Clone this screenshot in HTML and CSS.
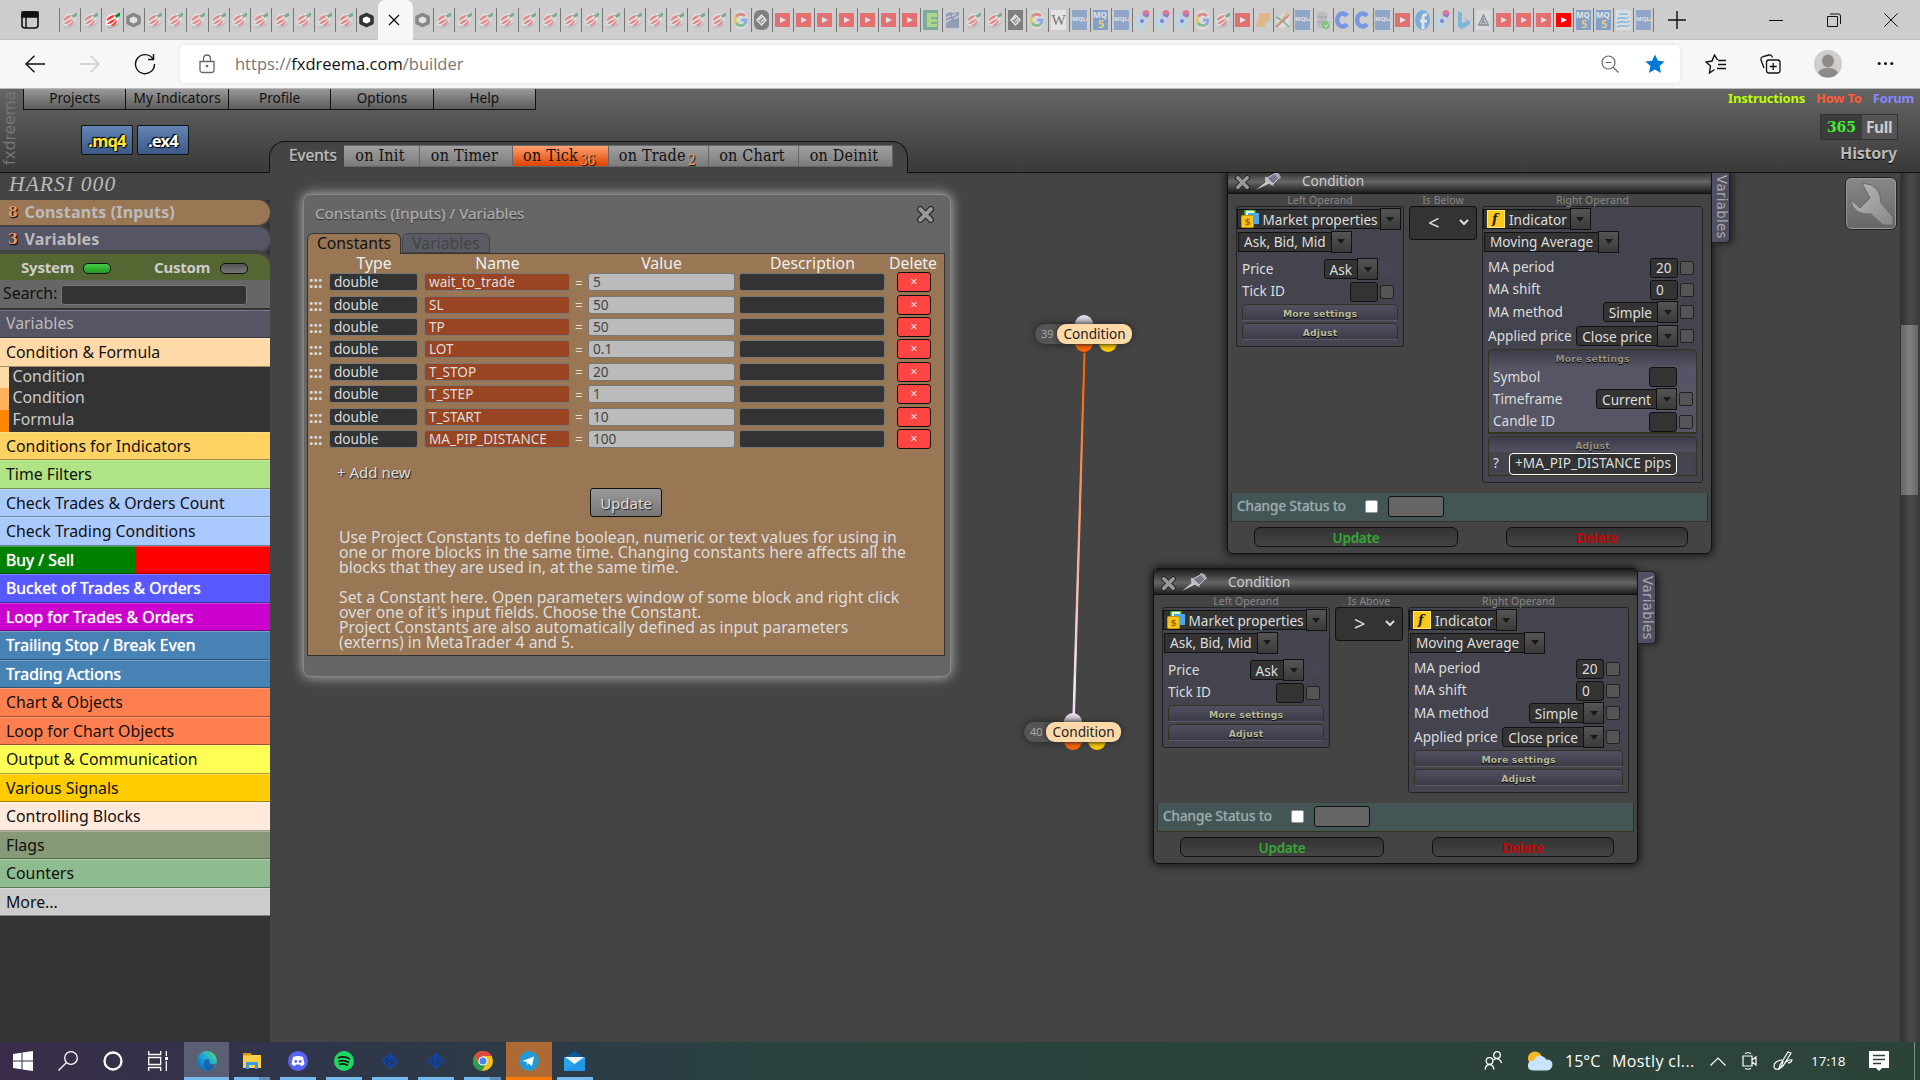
FILE: index.html
```html
<!DOCTYPE html>
<html lang="en">

<head>
    <meta charset="UTF-8">
    <title>fxDreema builder</title>
    <link rel="stylesheet" href="styles.css">
</head>

<body>
    <svg class="defs" width="0" height="0">
        <linearGradient id="wire" x1="0" y1="0" x2="0" y2="1">
            <stop offset="0.05" stop-color="#f60" />
            <stop offset="0.9" stop-color="#f6e6fa" />
        </linearGradient>
        <linearGradient id="edgeg" x1="0" y1="1" x2="1" y2="0">
            <stop offset="0" stop-color="#0c59a4" />
            <stop offset="0.5" stop-color="#1ba5dd" />
            <stop offset="1" stop-color="#5be06a" />
        </linearGradient>
        <linearGradient id="metal" x1="0" y1="0" x2="1" y2="1">
            <stop offset="0" stop-color="#bbb" />
            <stop offset="1" stop-color="#888" />
        </linearGradient>
    </svg>
    <svg class="symbols">
        <symbol id="fx" viewBox="0 0 15 20">
            <path d="M2 16Q7 19 13 13l1 1Q9 19 3 18z" fill="#aaa" />
            <path d="M1 15Q0 8 4 5 8 2 13 4 15 9 12 13 8 17 1 15z" fill="#f2f2f2" />
            <path d="M2 9Q5 5 10 5L8 7.500 2 11zM5 16Q8 14 12 10 12 14 8 16z" fill="#f33" />
            <path d="M2 14Q6 10 11 8.500 9 12 4 14z" fill="#f22" />
            <path d="M10 5L15 2.500V6L11 8z" fill="#178a3c" />
        </symbol>
        <symbol id="hex" viewBox="0 0 15 20">
            <path d="M7.500 4.500L13 7.200V12.800L7.500 15.500 2 12.800V7.200z" fill="#fff" stroke="#333" stroke-width="3.600" stroke-linejoin="round" />
        </symbol>
        <symbol id="g" viewBox="0 0 15 20">
            <ellipse cx="7.500" cy="10" rx="7.500" ry="10" fill="#fff" opacity=".7" />
            <g fill="none" stroke-width="3">
                <path d="M12 6A6 6 0 0 0 3 6.500" stroke="#ea4335" />
                <path d="M3 6.500A6 6 0 0 0 3 13" stroke="#fbbc05" />
                <path d="M3 13A6 6 0 0 0 11 14.500" stroke="#34a853" />
                <path d="M11 14.500Q13 13 13 10H8" stroke="#4285f4" />
            </g>
        </symbol>
        <symbol id="pill" viewBox="0 0 15 20">
            <rect width="15" height="20" rx="6" fill="#222" />
            <path d="M7.500 5L12 10 7.500 15 3 10zM5 10l3-3M7 12l3-3" fill="none" stroke="#fff" stroke-width="1.500" />
        </symbol>
        <symbol id="dark" viewBox="0 0 15 20">
            <rect width="15" height="20" fill="#222" />
            <path d="M7.500 5L12 10 7.500 15 3 10zM5 10l3-3M7 12l3-3" fill="none" stroke="#fff" stroke-width="1.500" />
        </symbol>
        <symbol id="yt" viewBox="0 0 15 20">
            <rect y="3" width="15" height="14" fill="#f00" />
            <path d="M5 7L11 10 5 13z" fill="#fff" />
        </symbol>
        <symbol id="e" viewBox="0 0 15 20">
            <rect width="15" height="20" fill="#1e8a5c" />
            <path d="M4 3H14V7H8V9H14V12H8V14H14V17H4z" fill="#8be03c" />
        </symbol>
        <symbol id="blue" viewBox="0 0 15 20">
            <path d="M1 4l4-2 3 1 6-1V18H1z" fill="#4a6199" />
            <path d="M1 8l4-2M1 12l5-3M7 6l4-2M9 9l5-3" stroke="#ccc" stroke-width="1.500" />
        </symbol>
        <symbol id="w" viewBox="0 0 15 20">
            <rect width="15" height="20" fill="#fff" />
            <text x="7.500" y="15" font-family="Liberation Serif" font-size="15" text-anchor="middle">W</text>
        </symbol>
        <symbol id="mql4" viewBox="0 0 15 20">
            <rect width="15" height="20" fill="#4a76c4" />
            <text x="0" y="11" font-family="Open Sans" font-weight="bold" font-size="6" fill="#fff">MQL</text>
            <path d="M13 11l2-4v4z" fill="#fc3" />
        </symbol>
        <symbol id="mql5" viewBox="0 0 15 20">
            <rect width="15" height="20" fill="#2b6cc4" />
            <text x="0" y="8" font-family="Open Sans" font-weight="bold" font-size="8" fill="#fff">MQ</text>
            <text x="5" y="18" font-family="Open Sans" font-weight="bold" font-size="11" fill="#fc2">5</text>
        </symbol>
        <symbol id="dots" viewBox="0 0 15 20">
            <path d="M1 6L10 1 13 12 7 20 0 16z" fill="#a9def5" />
            <circle cx="11" cy="3.500" r="3.500" fill="#f0134d" />
            <path d="M8 4l6 1-2 3z" fill="#22e" />
            <circle cx="7" cy="11" r="2" fill="#22e" />
        </symbol>
        <symbol id="org" viewBox="0 0 15 20">
            <path d="M4 3H15V11L12 11 9 17H1L3 12H1L4 8z" fill="#f7a035" />
        </symbol>
        <symbol id="chart" viewBox="0 0 15 20">
            <path d="M1 12L9 2 15 5 14 16 4 18z" fill="#f4f4e8" />
            <path d="M1 17L14 5" stroke="#c33" stroke-width="2" />
            <path d="M1 7L8 11 14 17" fill="none" stroke="#284" stroke-width="1.500" />
            <path d="M3 14L12 3" stroke="#c93" stroke-width="1.500" />
        </symbol>
        <symbol id="db" viewBox="0 0 15 20">
            <path d="M2 3Q7 0 12 3V17Q7 20 2 17z" fill="#a9a9b9" />
            <path d="M2 7H12M2 12H12" stroke="#667" />
            <circle cx="11" cy="15" r="4" fill="#2b2" />
            <path d="M9 15l2 2 3-4" fill="none" stroke="#fff" />
        </symbol>
        <symbol id="c" viewBox="0 0 15 20">
            <path d="M12 6A5.500 6.500 0 1 0 12 14" fill="none" stroke="#15f" stroke-width="4.500" />
        </symbol>
        <symbol id="fb" viewBox="0 0 15 20">
            <ellipse cx="7.500" cy="10" rx="7.500" ry="10" fill="#1487f0" />
            <path d="M12 5Q8 4 8 8V19M5 11H12" fill="none" stroke="#fff" stroke-width="3" />
        </symbol>
        <symbol id="bing" viewBox="0 0 15 20">
            <path d="M2 1L6 3V13L11 11 7 8 14 11V14L6 19 2 17z" fill="#1f9bea" />
        </symbol>
        <symbol id="tri" viewBox="0 0 15 20">
            <rect width="15" height="20" fill="#f4f4fa" opacity=".7" />
            <path d="M7.500 5L12.500 15H2.500zM7.500 8v5M5 15l2-5 3 5" fill="none" stroke="#345" stroke-width="1.300" />
        </symbol>
        <symbol id="lines" viewBox="0 0 15 20">
            <rect width="15" height="20" fill="#e4f2fb" />
            <path d="M3 4h9M1 9q3-2 6-1t6-1M1 13q4-2 7-1t6-1M1 17q4-2 7-1t6-1" fill="none" stroke="#39e" stroke-width="1.500" />
        </symbol>
        <symbol id="x" viewBox="0 0 16 16">
            <path d="M3 3L13 13M13 3L3 13" stroke="#2a2a2a" stroke-width="6" stroke-linecap="round" />
            <path d="M3 3L13 13M13 3L3 13" stroke="#999" stroke-width="3.800" stroke-linecap="round" />
        </symbol>
        <symbol id="pin" viewBox="0 0 26 20">
            <path d="M0 19L11 10l3 2z" fill="#ccc" />
            <path d="M9 6q6 0 9 9l-3-1-6-4z" fill="#bbc" />
            <path d="M11 7L20 2 23 7 17 13z" fill="#778" stroke="#ccd" />
            <path d="M18 1q5-1 7 6l-2 1q-3-2-5-7z" fill="#aab" />
        </symbol>
        <symbol id="market" viewBox="0 0 18 18">
            <path d="M4 0H14V10H4z" fill="#dfd" stroke="#3b2" stroke-width="1.500" />
            <rect x="7" y="3" width="11" height="11" fill="#4aa8ee" />
            <rect x="0.500" y="5.500" width="12" height="12" rx="1" fill="#f9c41b" stroke="#c8920a" />
            <text x="3.500" y="15" font-family="DejaVu Sans" font-weight="bold" font-size="9" fill="#a60">$</text>
        </symbol>
        <symbol id="func" viewBox="0 0 18 18">
            <rect x="0.500" y="0.500" width="17" height="17" fill="#fbc81c" stroke="#ffe680" />
            <text x="5" y="13" font-family="DejaVu Serif" font-style="italic" font-weight="bold" font-size="13" fill="#222">f</text>
        </symbol>
        <symbol id="term" viewBox="0 0 20 20">
            <path d="M10 1L19 10 10 19 1 10zM6 10l6-6M8 14l6-6" fill="#0f3f94" stroke="#1d4fa8" />
            <path d="M7 6v9M10 9l4 2-4 2" stroke="#24364a" stroke-width="1.500" fill="none" />
        </symbol>
    </svg>

    <div class="tabstrip">
        <svg class="tabmenu" width="18" height="18" viewBox="0 0 18 18"><rect x="1" y="1" width="16" height="16" rx="3" fill="none" stroke="#111" stroke-width="1.600" /><path d="M1 1H17V6H1zM5 5V17" fill="#111" stroke="#111" stroke-width="1.400" /></svg>
        <div class="favs left" id="favsA"></div>
        <div class="tab-active"><svg width="12" height="12" viewBox="0 0 12 12"><path d="M1 1L11 11M11 1L1 11" stroke="#111" stroke-width="1.300" /></svg></div>
        <div class="favs mid" id="favsB"></div>
        <div class="favs right" id="favsC"></div>
        <svg class="newtab" width="18" height="18" viewBox="0 0 18 18"><path d="M9 0V18M0 9H18" stroke="#111" stroke-width="1.400" /></svg>
        <div class="wincontrols">
            <svg width="14" height="14" viewBox="0 0 14 14"><path d="M0 7.500H14" stroke="#111" /></svg>
            <svg width="14" height="14" viewBox="0 0 14 14"><path d="M.5 3.500h10v10H.5zM3 1h8.500q2 0 2 2v8" fill="none" stroke="#111" /></svg>
            <svg width="14" height="14" viewBox="0 0 14 14"><path d="M.5.5l13 13M13.500.5l-13 13" stroke="#111" /></svg>
        </div>
    </div>

    <div class="toolbar">
        <svg class="back" width="20" height="18" viewBox="0 0 20 18"><path d="M20 9H1M9.500.700L1 9l8.500 8.300" fill="none" stroke="#111" stroke-width="1.400" /></svg>
        <svg class="fwd" width="20" height="18" viewBox="0 0 20 18"><path d="M0 9H19M10.500.700L19 9l-8.500 8.300" fill="none" stroke="#ccc" stroke-width="1.400" /></svg>
        <svg class="reload" width="22" height="22" viewBox="0 0 22 22"><path d="M19 6A9.500 9.500 0 1 0 20.500 11M19.500 1V6.500H14" fill="none" stroke="#111" stroke-width="1.400" /></svg>
        <div class="address">
            <svg class="lock" width="16" height="20" viewBox="0 0 16 20"><path d="M1 7.500H15V16q0 2.500-2.500 2.500h-9Q1 18.500 1 16zM4.500 7.500V5q0-4 3.500-4t3.500 4v2.500" fill="none" stroke="#666" stroke-width="1.300" /><circle cx="8" cy="12" r="1.300" fill="#666" /></svg>
            <span class="url">https://<b>fxdreema.com</b>/builder</span>
            <svg class="zoomout" width="18" height="18" viewBox="0 0 18 18"><circle cx="7.500" cy="7.500" r="6.500" fill="none" stroke="#666" stroke-width="1.200" /><path d="M4.500 7.500h6M12 12l5.500 5.500" stroke="#666" stroke-width="1.200" /></svg>
            <svg width="20" height="20" viewBox="0 0 20 20"><path d="M10 .5l2.900 6.200 6.700.800-5 4.600 1.400 6.900-6-3.400-6 3.400 1.400-6.900-5-4.600 6.700-.800z" fill="#0078d7" /></svg>
        </div>
        <svg class="fav" width="21" height="20" viewBox="0 0 21 20"><path d="M12.500 6L9.500 1 7 7 1 8l4.500 4L4.500 19 9.500 15.500M13 6.500h8M13 10.500h8M12 14.500h9" fill="none" stroke="#111" stroke-width="1.400" /></svg>
        <svg class="coll" width="21" height="20" viewBox="0 0 21 20"><rect x="6.500" y="6" width="13.500" height="13" rx="2.500" fill="#f7f7f7" stroke="#111" stroke-width="1.300" /><path d="M4 14L1 6Q.5 3.500 3 2.500L9 1q2.500-.5 3.500 2.500M13.200 9v7M9.700 12.500h7" fill="none" stroke="#111" stroke-width="1.300" /></svg>
        <svg class="avatar" width="28" height="28" viewBox="0 0 28 28"><circle cx="14" cy="14" r="14" fill="#d0cdca" /><ellipse cx="14" cy="11" rx="6" ry="6.500" fill="#8e8a87" /><path d="M4 23q2-5 10-5t10 5q-4 4.500-10 4.500T4 23z" fill="#8e8a87" /></svg>
        <svg class="dots3" width="17" height="5" viewBox="0 0 17 5"><g fill="#111"><circle cx="2.200" cy="2.500" r="1.500" /><circle cx="8.500" cy="2.500" r="1.500" /><circle cx="14.800" cy="2.500" r="1.500" /></g></svg>
    </div>

    <header>
        <div class="brand">fxdreema</div>
        <nav class="menu"><a>Projects</a><a>My Indicators</a><a>Profile</a><a>Options</a><a>Help</a></nav>
        <div class="exports"><button class="mq4">.mq4</button><button>.ex4</button></div>
        <div class="events">
            <span class="caption">Events</span>
            <a class="ev w1">on Init</a><a class="ev w2">on Timer</a><a class="ev w3 valgt">on Tick<sub>36</sub></a><a class="ev w4">on Trade<sub>2</sub></a><a class="ev w5">on Chart</a><a class="ev w6">on Deinit</a>
        </div>
        <div class="account">
            <div class="links"><a class="ins">Instructions</a><a class="how">How To</a><a class="forum">Forum</a></div>
            <div class="plan"><b>365</b><span>Full</span></div>
            <div class="history">History</div>
        </div>
    </header>

    <div class="work">
        <aside>
            <div class="project">HARSI 000</div>
            <div class="pill const"><i>8</i>Constants (Inputs)</div>
            <div class="pill vars"><i>3</i>Variables</div>
            <div class="switches"><span>System</span><em class="on"></em><span class="cust">Custom</span><em></em></div>
            <div class="search">Search:<div class="searchbox"></div></div>
            <div class="cat first" style="background-color:#555566">Variables</div>
            <div class="cat" style="background-color:#ffd9a8">Condition &amp; Formula</div>
            <div class="sub s1">Condition</div>
            <div class="sub s2">Condition</div>
            <div class="sub s3">Formula</div>
            <div id="cats"></div>
        </aside>

        <main>
            <svg class="wires" width="900" height="600" viewBox="0 0 900 600"><path d="M814 180L803 541 804.500 541 815 180z" fill="url(#wire)" stroke="url(#wire)" /></svg>

            <div class="node n1">
                <i class="dot in"></i><i class="dot out"></i><i class="dot alt"></i>
                <span class="num">39</span><span class="name">Condition</span>
            </div>
            <div class="node n2">
                <i class="dot in"></i><i class="dot out"></i><i class="dot alt"></i>
                <span class="num">40</span><span class="name">Condition</span>
            </div>

            <section class="constants">
                <div class="title">Constants (Inputs) / Variables<svg width="17" height="17"><use href="#x" /></svg></div>
                <div class="tabs"><span class="t on">Constants</span><span class="t">Variables</span></div>
                <div class="panel">
                    <div class="row head"><span class="c1">Type</span><span class="c2">Name</span><span class="c3">Value</span><span class="c4">Description</span><span class="c5">Delete</span></div>
                    <div id="rows"></div>
                    <div class="add">+ Add new</div>
                    <button class="update">Update</button>
                    <p>Use Project Constants to define boolean, numeric or text values for using in<br>one or more blocks in the same time. Changing constants here affects all the<br>blocks that they are used in, at the same time.<br><br>Set a Constant here. Open parameters window of some block and right click<br>over one of it's input fields. Choose the Constant.<br>Project Constants are also automatically defined as input parameters<br>(externs) in MetaTrader 4 and 5.</p>
                </div>
            </section>

            <section class="cond win1" data-op="&lt;" data-label="Is Below" data-open="1"></section>
            <section class="cond win2" data-op="&gt;" data-label="Is Above"></section>

            <div class="wrench"><svg width="44" height="44" viewBox="0 0 44 44"><path d="M13 2Q32 3 32 22L44 36V44H34L22 33Q5 35 1 18L11 27 21 17z" fill="url(#metal)" stroke="#666" /></svg></div>
        </main>
        <div class="scroll"><div class="thumb"></div></div>
    </div>

    <footer class="taskbar">
        <div class="tb"><svg width="20" height="20" viewBox="0 0 20 20"><path d="M0 3L8.500 1.800V9.500H0zM9.500 1.600L20 0V9.500H9.500zM0 10.500H8.500V18.200L0 17zM9.500 10.500H20V20L9.500 18.400z" fill="#fff" /></svg></div>
        <div class="tb"><svg width="20" height="20" viewBox="0 0 20 20"><circle cx="13" cy="7" r="6.300" fill="none" stroke="#fff" stroke-width="1.300" /><path d="M8.500 11.500L.5 19.500" stroke="#fff" stroke-width="1.300" /></svg></div>
        <div class="tb"><svg width="20" height="20" viewBox="0 0 20 20"><circle cx="10" cy="10" r="8.500" fill="none" stroke="#fff" stroke-width="2.300" /></svg></div>
        <div class="tb"><svg width="20" height="20" viewBox="0 0 20 20"><path d="M.7 0v3.500h12V0M.7 20v-3.500h12V20M.7 6.500h12v7H.7zM18.300 0v5M18.300 10v10" fill="none" stroke="#fff" stroke-width="1.300" /><rect x="17" y="6" width="3" height="3" fill="#fff" /></svg></div>
        <div class="tb app cur"><svg width="20" height="20" viewBox="0 0 20 20"><circle cx="10" cy="10" r="10" fill="url(#edgeg)" /><path d="M7 12Q7 8 11 8 14 9 12 12 16 15 19 12 17 19 11 20 6 18 7 12z" fill="#1766b5" /><path d="M12 12q3 3 7 1l-1 2q-4 1-6-3z" fill="#555a72" /></svg></div>
        <div class="tb app two"><svg width="18" height="18" viewBox="0 0 18 18"><path d="M0 1H7L9 3H18V16H0z" fill="#ffcf48" /><path d="M0 1H7L8.500 3.500H0z" fill="#d99a13" /><path d="M3 17V10H15V17H12V13H6V17z" fill="#3a9be8" /></svg></div>
        <div class="tb app"><svg width="20" height="20" viewBox="0 0 20 20"><circle cx="10" cy="10" r="10" fill="#5865f2" /><path d="M5 6Q10 4 15 6L16.500 13Q15 15 13 15L12 13.500H8L7 15Q5 15 3.500 13z" fill="#fff" /><circle cx="7.800" cy="10.500" r="1.400" fill="#5865f2" /><circle cx="12.200" cy="10.500" r="1.400" fill="#5865f2" /></svg></div>
        <div class="tb app"><svg width="20" height="20" viewBox="0 0 20 20"><circle cx="10" cy="10" r="10" fill="#1ed760" /><path d="M4 7Q10 4.500 16 8M4.500 10.500Q10 8.500 15 11.500M5 13.500Q10 12 14 14.500" fill="none" stroke="#111" stroke-width="1.700" /></svg></div>
        <div class="tb app"><svg width="20" height="18"><use href="#term" /></svg></div>
        <div class="tb app"><svg width="20" height="18"><use href="#term" /></svg></div>
        <div class="tb app two"><svg width="20" height="20" viewBox="0 0 20 20"><circle cx="10" cy="10" r="10" fill="#fbc116" /><path d="M1.300 5A10 10 0 0 1 18.700 5H10L6 12z" fill="#dd4b3e" /><path d="M1.300 5A10 10 0 0 0 9 20L13 13H6z" fill="#2a9d4e" /><circle cx="10" cy="10" r="4.600" fill="#fff" /><circle cx="10" cy="10" r="3.500" fill="#4285f4" /></svg></div>
        <div class="tb app alert"><svg width="20" height="20" viewBox="0 0 20 20"><circle cx="10" cy="10" r="10" fill="#2399d5" /><path d="M3.500 10L15 5.500 13 15 9.500 12.500 8 14V11z" fill="#fff" /></svg></div>
        <div class="tb app"><svg width="21" height="20" viewBox="0 0 21 20"><path d="M0 7L10.500 0 21 7z" fill="#0c5a9e" /><path d="M0 6H21V20H0z" fill="#29a4ea" /><path d="M1 6H20L10.500 13z" fill="#f4f4f4" /><path d="M0 20L21 8V20z" fill="#1b8ee0" opacity=".6" /></svg></div>
        <div class="tray">
            <svg class="people" width="19" height="20" viewBox="0 0 19 20"><g fill="none" stroke="#fff" stroke-width="1.300"><circle cx="13" cy="4" r="3.300" /><circle cx="5.500" cy="10" r="3.300" /><path d="M9.500 9Q12 6.500 15 8.500 17 9.500 17.500 12M1 18.500Q2 13.500 5.500 13.500T10 18.500" /></g></svg>
            <svg class="weather" width="26" height="20" viewBox="0 0 26 20"><circle cx="8" cy="7.500" r="7" fill="#fbb829" /><path d="M6 19.500Q0 19 1 13.500 2 9 7 9.500 9 4 14 5 18 5.500 19 8.500 25 8 25.500 13.500 25 19 20 19.500z" fill="#c9e4fa" /></svg>
            <span class="temp">15°C</span><span class="sky">Mostly cl...</span>
            <svg class="chev" width="16" height="9" viewBox="0 0 16 9"><path d="M.5 8.500L8 1l7.500 7.500" fill="none" stroke="#fff" stroke-width="1.200" /></svg>
            <svg class="cam" width="15" height="18" viewBox="0 0 15 18"><path d="M1 4h9v10H1zM10 8l4-3v8l-4-3M3 1.500q3-1.500 6 0M3 16.500q3 1.500 6 0" fill="none" stroke="#fff" stroke-width="1.200" /></svg>
            <svg class="pen" width="20" height="20" viewBox="0 0 20 20"><path d="M7 14L15 1l3 1-8 13-4 3zM9 9q-8 1-8 6 0 4 4 3t5-8M13 11q4-3 6-2-1 3-4 3" fill="none" stroke="#fff" stroke-width="1.200" /></svg>
            <span class="clock">17:18</span>
            <svg class="note" width="20" height="20" viewBox="0 0 20 20"><path d="M0 0H20V17H13L10 20 7 17H0z" fill="#fff" /><path d="M4 4.500H16M4 8.500H16M4 12.500H12" stroke="#2c4438" stroke-width="1.300" /></svg>
        </div>
    </footer>

    <script>
        const favs = {
            favsA: "fx fx fx! hex fx fx fx fx fx fx fx fx fx fx hex!",
            favsB: "hex fx fx fx fx fx fx fx fx fx fx fx fx fx fx g pill yt yt yt yt yt yt yt e blue fx fx dark g w mql4 mql5 mql4",
            favsC: "dots dots dots g fx yt org chart mql4 db c c mql4 yt fb dots bing tri yt yt yt yt! mql5 mql5 lines mql4"
        };

        const cats = [
            ["Conditions for Indicators", "#ffd264"],
            ["Time Filters", "#b0e384"],
            ["Check Trades & Orders Count", "#aacaff"],
            ["Check Trading Conditions", "#aacaff"],
            ["Buy / Sell", "#f00", "lys buysell"],
            ["Bucket of Trades & Orders", "#5858ff", "lys"],
            ["Loop for Trades & Orders", "#cc00cc", "lys"],
            ["Trailing Stop / Break Even", "#4682b4", "lys"],
            ["Trading Actions", "#4682b4", "lys"],
            ["Chart & Objects", "#ff7f50"],
            ["Loop for Chart Objects", "#ff7f50"],
            ["Output & Communication", "#ffff55"],
            ["Various Signals", "#ffcc00"],
            ["Controlling Blocks", "#ffeadb"],
            ["Flags", "#889977"],
            ["Counters", "#8fbc8f"],
            ["More...", "#cccccc"]
        ];

        const constants = [
            ["wait_to_trade", "5"], ["SL", "50"], ["TP", "50"], ["LOT", "0.1"],
            ["T_STOP", "20"], ["T_STEP", "1"], ["T_START", "10"], ["MA_PIP_DISTANCE", "100"]
        ];

        for (const id in favs) {
            document.querySelector("#" + id).innerHTML = favs[id].split(" ").map(f => {
                const bright = f.endsWith("!");
                return `<span class="fav-slot"><svg class="${bright ? "bright" : ""}" width="15" height="20"><use href="#${f.replace("!", "")}"/></svg></span>`;
            }).join("");
        }

        cats.forEach(cat => {
            const div = document.createElement("div");
            div.className = "cat " + (cat[2] || "");
            div.style.backgroundColor = cat[1];
            div.textContent = cat[0];
            document.querySelector("#cats").appendChild(div);
        });

        document.querySelector("#rows").innerHTML = constants.map(c =>
            `<div class="row"><span class="grip">:::</span><span class="inp type">double</span><span class="inp name">${c[0]}</span><span class="eq">=</span><span class="inp val">${c[1]}</span><span class="inp desc"></span><span class="del">×</span></div>`
        ).join("");

        const select = (text, cls = "") => `<span class="sel ${cls}"><span class="txt">${text}</span><i class="arrow"></i></span>`;
        const field = (label, ctrl, box = "box", cls = "") => `<div class="field ${cls}"><label>${label}</label>${ctrl}<i class="${box}"></i></div>`;
        const input = (v = "") => `<span class="num-in">${v}</span>`;

        document.querySelectorAll(".cond").forEach(win => {
            const open = win.dataset.open;
            const more = open ?
                `<div class="fold open">More settings</div>
                 <div class="foldbody">
                    ${field("Symbol", input(), "box faint")}
                    ${field("Timeframe", select("Current"))}
                    ${field("Candle ID", input())}
                 </div>
                 <div class="fold open">Adjust</div>
                 <div class="foldbody adj">${field("?", '<span class="adjust">+MA_PIP_DISTANCE pips</span>', "box faint")}</div>` :
                `<div class="fold">More settings</div><div class="fold">Adjust</div>`;

            win.innerHTML = `
                <div class="bar"><svg class="close" width="15" height="15"><use href="#x"/></svg><svg class="pin" width="26" height="20"><use href="#pin"/></svg><span>Condition</span></div>
                <div class="sidetab">Variables</div>
                <div class="operands">
                    <div class="op left"><h4>Left Operand</h4><div class="oppanel">
                        ${select('<svg width="18" height="18"><use href="#market"/></svg>Market properties', "big")}
                        ${select("Ask, Bid, Mid", "mid")}
                        <div class="fields">${field("Price", select("Ask"), "box faint", "tall")}${field("Tick ID", input())}</div>
                        <div class="fold">More settings</div><div class="fold">Adjust</div>
                    </div></div>
                    <div class="op center"><h4>${win.dataset.label}</h4><div class="compare"><span>${win.dataset.op}</span><svg width="10" height="7" viewBox="0 0 10 7"><path d="M1 1l4 4 4-4" fill="none" stroke="#ddd" stroke-width="2"/></svg></div></div>
                    <div class="op right"><h4>Right Operand</h4><div class="oppanel">
                        ${select('<svg width="18" height="18"><use href="#func"/></svg>Indicator', "big")}
                        ${select("Moving Average", "mid")}
                        <div class="fields">${field("MA period", input("20"))}${field("MA shift", input("0"))}${field("MA method", select("Simple"), "box", "tall")}${field("Applied price", select("Close price"), "box", "tall")}</div>
                        ${more}
                    </div></div>
                </div>
                <div class="status"><span>Change Status to</span><i class="check"></i><i class="stat"></i></div>
                <div class="actions"><button class="upd">Update</button><button class="dlt">Delete</button></div>`;
        });
    </script>
</body>

</html>
```
FILE: styles.css
```css
* {
    box-sizing: border-box;
}

body {
    margin: 0;
    width: 1920px;
    height: 1080px;
    overflow: hidden;
    display: flex;
    flex-direction: column;
    background-color: #444;
    font-family: "Noto Sans", sans-serif;
    font-size: 13.6px;
}

svg {
    display: block;
    flex: none;
}

.defs {
    position: absolute;
}

.symbols {
    display: none;
}

i,
em {
    font-style: normal;
}

/* browser */
.tabstrip {
    height: 40px;
    flex: none;
    background-color: #cdcdcd;
    border-bottom: 1px solid #c0c0c0;
    display: flex;
    align-items: center;
}

.tabmenu {
    margin-left: 21px;
    margin-right: 20px;
}

.favs {
    display: flex;
    height: 24px;
}

.favs.left {
    width: 318.5px;
    border-left: 1px solid #777;
}

.favs.mid {
    width: 721px;
}

.favs.right {
    width: 521px;
}

.fav-slot {
    flex: 1;
    display: flex;
    justify-content: center;
    align-items: center;
    border-right: 1px solid #777;
}

.favs.left .fav-slot:last-child {
    border-right: none;
}

.fav-slot svg {
    opacity: .45;
    margin-right: 1px;
}

.fav-slot svg.bright {
    opacity: 1;
}

.tab-active {
    width: 35px;
    height: 40px;
    background-color: #f7f7f7;
    border-radius: 7px 7px 0 0;
    display: flex;
    align-items: center;
    justify-content: center;
    padding-right: 3px;
}

.newtab {
    margin-left: 13px;
}

.wincontrols {
    margin-left: auto;
    margin-right: 22px;
    display: flex;
    gap: 43.5px;
}

.toolbar {
    height: 49px;
    flex: none;
    background-color: #f7f7f7;
    border-bottom: 1px solid #bbb;
    display: flex;
    align-items: center;
    padding-left: 25px;
    padding-bottom: 1px;
}

.fwd {
    margin-left: 35px;
}

.reload {
    margin-left: 34px;
}

.address {
    margin-left: 24px;
    width: 1500px;
    height: 38px;
    background-color: white;
    border-radius: 5px;
    box-shadow: 0 0 4px #ddd;
    display: flex;
    align-items: center;
    padding: 0 15px 0 19px;
}

.url {
    margin-left: 20px;
    font-family: "Open Sans", sans-serif;
    font-size: 16.5px;
    color: #767676;
    flex: 1;
}

.url b {
    font-weight: normal;
    color: #111;
}

.zoomout {
    margin-right: 26px;
}

.fav {
    margin-left: 25px;
}

.coll {
    margin-left: 34px;
}

.avatar {
    margin-left: 33px;
}

.dots3 {
    margin-left: 35px;
}

/* page header */
header {
    height: 84px;
    flex: none;
    display: grid;
    grid-template-columns: 23px 246px 639px 1fr;
    grid-template-rows: 22px 30px 31px;
    background: linear-gradient(#656565, #3a3a3a);
    border-bottom: 1px solid #111;
    position: relative;
    z-index: 5;
}

.brand {
    grid-row: 1 / 4;
    writing-mode: vertical-rl;
    transform: rotate(180deg);
    font-family: "DejaVu Sans", sans-serif;
    font-size: 15.5px;
    line-height: 20px;
    color: #777;
    text-align: right;
    padding-bottom: 2px;
}

.menu {
    grid-column: 2 / 4;
    display: flex;
    width: 513px;
    height: 21px;
    border: 1px solid #111;
    border-top: none;
    background: linear-gradient(#999, #5c5c5c);
}

.menu a {
    flex: 1;
    text-align: center;
    line-height: 18px;
    color: #111;
}

.menu a+a {
    border-left: 1px solid #111;
}

.exports {
    grid-column: 2;
    grid-row: 2 / 4;
    display: flex;
    gap: 4px;
    padding: 14px 0 0 58px;
}

.exports button {
    width: 52px;
    height: 30px;
    padding: 0;
    background: linear-gradient(#6484b4, #3c5a88);
    border: 1px solid #111;
    border-radius: 2px;
    color: white;
    font: bold 16.5px "Noto Sans", sans-serif;
    letter-spacing: -.8px;
    text-shadow: 0 0 2px #000, 1px 1px 1px #000, -1px -1px 1px #000;
}

.exports .mq4 {
    color: #ffe83c;
}

.events {
    grid-column: 3;
    grid-row: 3;
    height: 32px;
    background-color: #444;
    border: 1px solid #111;
    border-bottom: none;
    border-radius: 16px 16px 0 0;
    display: flex;
    padding-top: 3px;
    padding-left: 19px;
    align-items: flex-start;
}

.caption {
    width: 55px;
    line-height: 21px;
    font-size: 15.5px;
    color: #bbb;
    text-shadow: 0 0 1px #bbb, 0 1px 1px #000;
}

.ev {
    height: 22px;
    padding-right: 3px;
    line-height: 19px;
    text-align: center;
    font-family: "DejaVu Serif Condensed", "DejaVu Serif", serif;
    font-stretch: condensed;
    font-size: 16px;
    letter-spacing: .2px;
    color: #111;
    background: linear-gradient(#a0a0a0, #7c7c7c);
    border: 1px solid #666;
    border-left: none;
    white-space: nowrap;
}

.ev sub {
    font-size: 14px;
    line-height: 0;
    color: #e8a070;
    text-shadow: 1px 1px 1px #000;
    margin-left: 2px;
    letter-spacing: -.5px;
}

.ev.valgt {
    background: linear-gradient(#ffa070, #dd4400);
}

.w1 {
    width: 76px;
}

.w2 {
    width: 93px;
}

.w3 {
    width: 96px;
}

.w4 {
    width: 100px;
}

.w5 {
    width: 90px;
}

.w6 {
    width: 94px;
}

.account {
    grid-column: 4;
    grid-row: 1 / 4;
    display: flex;
    flex-direction: column;
    align-items: flex-end;
    font-weight: bold;
}

.links {
    display: flex;
    gap: 11px;
    padding-right: 6px;
    height: 25px;
    font-size: 13px;
    line-height: 18px;
    letter-spacing: -.2px;
}

.ins {
    color: #bf0;
}

.how {
    color: #ff5a35;
}

.forum {
    color: #88f;
}

.plan {
    width: 78px;
    height: 26px;
    margin-right: 22px;
    border: 1px solid #333;
    display: flex;
    line-height: 24px;
    background-color: #555;
    font-size: 15.5px;
    color: #ccc;
}

.plan b {
    width: 41px;
    text-align: center;
    background-color: #3c3c3c;
    color: #4e3;
    font-family: "DejaVu Serif", serif;
    font-size: 14px;
}

.plan span {
    padding-left: 4px;
    letter-spacing: -.4px;
}

.history {
    margin-right: 23px;
    line-height: 27px;
    font-size: 16px;
    color: #bbb;
    letter-spacing: -.2px;
    text-shadow: 0 1px 1px #000;
}

/* left menu */
.work {
    flex: 1;
    display: flex;
    min-height: 0;
}

aside {
    width: 270px;
    flex: none;
    background-color: #333;
    font-size: 15.85px;
}

.project {
    height: 27px;
    padding-left: 9px;
    background-color: #444;
    font-family: "Liberation Serif", serif;
    font-style: italic;
    font-size: 21.5px;
    letter-spacing: 1.1px;
    line-height: 23px;
    color: #bbb;
}

.pill {
    height: 25px;
    margin-bottom: 2px;
    border-radius: 0 13px 13px 0;
    background-color: #555566;
    box-shadow: 0 0 0 2px #444;
    font-weight: bold;
    line-height: 24px;
    color: #bbb;
    padding-left: 8px;
    display: flex;
    font-size: 16px;
    letter-spacing: .15px;
}

.pill.const {
    background-color: #997755;
}

.pill i {
    width: 16.5px;
    font-family: "DejaVu Serif", serif;
    font-size: 14px;
    color: #e09a6a;
    text-shadow: 1px 1px 1px #000;
}

.switches {
    height: 26px;
    display: flex;
    align-items: center;
    background-color: #556633;
    border-radius: 0 13px 0 0;
    box-shadow: 0 -2px 0 2px #444;
    padding-left: 21px;
    font-weight: bold;
    font-size: 15px;
    color: #ccc;
    letter-spacing: -.2px;
    position: relative;
}

.switches span {
    width: 62px;
}

.switches .cust {
    margin-left: 43px;
    width: 66px;
}

.switches em {
    width: 28px;
    height: 11px;
    margin-top: 3px;
    border: 1px solid #111;
    border-radius: 5px;
    background: linear-gradient(#555, #777);
}

.switches .on {
    background: linear-gradient(#4c4, #292);
}

.search {
    height: 28px;
    display: flex;
    padding: 5px 0 0 3px;
    background-color: #666;
    line-height: 17px;
    color: #111;
    position: relative;
}

.searchbox {
    margin-left: 4px;
    width: 186px;
    height: 20px;
    background-color: #333;
    border: 1px solid #777;
    border-radius: 3px;
}

.cat {
    height: 28.5px;
    padding-left: 6px;
    border-top: 1px solid rgba(255, 255, 255, .25);
    border-bottom: 1px solid rgba(0, 0, 0, .35);
    line-height: 26px;
    color: #111;
}

.cat.first {
    margin-top: 2px;
    height: 28px;
    line-height: 25px;
    color: #bbb;
}

.lys {
    color: white;
    text-shadow: 0 0 1px #fff;
}

.buysell {
    background-image: linear-gradient(90deg, #008000 50%, #f00 50%);
}

.sub {
    height: 21.7px;
    line-height: 18px;
    padding-left: 3.5px;
    border-left: 9px solid #ffd9a8;
    color: #ccc;
}

.s2 {
    border-color: #ffb25c;
}

.s3 {
    border-color: #f80;
}

/* canvas */
main {
    flex: 1;
    position: relative;
    overflow: hidden;
}

.wires {
    position: absolute;
    left: 0;
    top: 0;
}

.node {
    position: absolute;
    height: 20px;
    display: flex;
}

.n1 {
    left: 765px;
    top: 151px;
}

.n2 {
    left: 754px;
    top: 549px;
}

.num {
    width: 32px;
    padding-left: 6px;
    background-color: #555;
    border-radius: 10px 0 0 10px;
    font-size: 11px;
    line-height: 19px;
    color: #aaa;
    box-shadow: 0 0 8px #222;
}

.name {
    position: relative;
}

.node .name {
    width: 75px;
    margin-left: -10px;
    background-color: #ffd9a8;
    border-radius: 9px;
    text-align: center;
    line-height: 19px;
    color: #222;
    box-shadow: 0 0 6px #222;
}

.dot {
    position: absolute;
    left: 40px;
    width: 18px;
    height: 18px;
    border-radius: 9px;
}

.dot.in {
    top: -9px;
    background: linear-gradient(#f4e4f8, #aaa 60%);
}

.dot.out {
    top: 10px;
    background: linear-gradient(#833 40%, #f60 70%);
}

.dot.alt {
    top: 10px;
    left: 64px;
    background: linear-gradient(#860 40%, #fc0 70%);
}

.constants {
    position: absolute;
    left: 33px;
    top: 21px;
    width: 648px;
    height: 483px;
    padding: 0 5px 0 3px;
    background-color: #666;
    border: 1px solid #888;
    border-radius: 8px;
    box-shadow: 0 0 12px 1px #aaa;
    font-size: 15.75px;
}

.title {
    height: 38px;
    padding: 0 11px 2px 8px;
    display: flex;
    justify-content: space-between;
    align-items: center;
    color: #aaa;
    font-size: 15.2px;
    text-shadow: 0 0 1px #999, 0 1px 1px #222;
}

.title svg {
    margin-top: 2px;
}

.tabs {
    display: flex;
    height: 21px;
    gap: 1px;
    margin-bottom: -1px;
}

.t {
    width: 88px;
    height: 20px;
    border: 1px solid #444;
    border-radius: 6px 6px 0 0;
    background-color: #5b5b66;
    line-height: 18px;
    text-align: center;
    color: #444;
}

.t.on {
    position: relative;
    width: 94px;
    height: 21px;
    background-color: #997755;
    border-color: #333;
    border-bottom: none;
    color: #111;
}

.panel {
    height: 403px;
    border: 1px solid #333;
    background-color: #997755;
    color: #ddd;
}

.row {
    height: 22.4px;
    display: flex;
    align-items: center;
}

.head {
    height: 17px;
    color: #eee;
    text-align: center;
}

.head span {
    flex: none;
}

.head .c1 {
    width: 132px;
}

.head .c2 {
    width: 115px;
}

.head .c3 {
    width: 213px;
}

.head .c4 {
    width: 89px;
}

.head .c5 {
    margin-left: 24px;
    width: 64px;
}

.grip {
    width: 21px;
    padding-left: 1px;
    font-size: 16px;
    font-weight: bold;
    line-height: 18px;
}

.inp {
    height: 18px;
    border: 1px solid #777;
    border-radius: 3px;
    background-color: #333;
    font-size: 13.6px;
    line-height: 15px;
    padding-left: 4px;
}

.type {
    width: 89px;
}

.inp.name {
    width: 146px;
    margin-left: 6px;
    background-color: #994422;
}

.eq {
    width: 18px;
    text-align: center;
    font-size: 13.6px;
}

.val {
    width: 147px;
    background-color: #bbb;
    color: #444;
}

.desc {
    width: 146px;
    margin-left: 4px;
}

.del {
    width: 34px;
    height: 20px;
    margin-left: 12px;
    border: 1px solid #111;
    border-radius: 3px;
    background-color: #f44;
    text-align: center;
    font-size: 13px;
    line-height: 16px;
}

.add {
    margin: 11px 0 0 29px;
    line-height: 22px;
    font-size: 15px;
    text-shadow: 1px 1px 1px #222;
}

.update {
    display: block;
    width: 72px;
    height: 29px;
    margin: 5px 0 0 282px;
    padding: 0;
    border: 1px solid #111;
    border-radius: 3px;
    background: linear-gradient(#999, #777);
    color: #ddd;
    font: 15px "Noto Sans", sans-serif;
    text-shadow: 1px 1px 1px #222;
}

.constants p {
    margin: 13px 0 0 31px;
    line-height: 15.05px;
    white-space: nowrap;
}

/* condition windows */
.cond {
    position: absolute;
    width: 485px;
    background-color: #444;
    border: 1px solid #111;
    border-radius: 6px;
    box-shadow: 0 0 8px 1px #111;
    color: #ddd;
}

.win1 {
    left: 957px;
    top: -6px;
    height: 387px;
}

.win2 {
    left: 883px;
    top: 395px;
    height: 296px;
}

.bar {
    height: 26px;
    display: flex;
    align-items: center;
    border-bottom: 1px solid #111;
    border-radius: 5px 5px 0 0;
    background: linear-gradient(#1c1c1c, #666 55%, #1c1c1c);
    padding-left: 7px;
    color: #ccc;
}

.bar span {
    margin-left: 20px;
    padding-bottom: 1px;
}

.pin {
    margin-left: 6px;
}

.bar svg.close {
    margin-top: 3px;
}

.sidetab {
    position: absolute;
    left: 484px;
    top: 2px;
    width: 18px;
    height: 73px;
    background-color: #505064;
    border: 1px solid #222;
    border-left: none;
    border-radius: 0 5px 5px 0;
    box-shadow: 3px 1px 6px #222;
    writing-mode: vertical-rl;
    padding-top: 4px;
    line-height: 16px;
    font-family: "DejaVu Sans", sans-serif;
    font-size: 13.2px;
    letter-spacing: .4px;
    color: #aaa;
}

.operands {
    display: flex;
    align-items: flex-start;
    padding-left: 8px;
}

h4 {
    margin: 0;
    height: 12px;
    font-weight: normal;
    font-size: 10.4px;
    letter-spacing: .1px;
    line-height: 13px;
    text-align: center;
    color: #888;
}

.left {
    width: 168px;
}

.center {
    width: 68px;
    margin: 0 5px;
}

.op.right {
    width: 221px;
}

.oppanel {
    border: 1px solid #222;
    border-radius: 3px;
    background-color: #44444f;
    padding: 1px 0 4px;
}

.compare {
    height: 34px;
    border: 1px solid #111;
    border-radius: 3px;
    background-color: #333;
    display: flex;
    align-items: center;
    justify-content: space-between;
    padding: 0 7px 2px 18px;
    font-size: 20px;
}

.sel {
    display: flex;
    align-items: center;
    height: 22px;
}

.txt {
    height: 20px;
    display: flex;
    align-items: center;
    gap: 4px;
    padding: 0 5px;
    line-height: 17px;
    background-color: #333;
    border: 1px solid #111;
    border-radius: 3px 0 0 3px;
    white-space: nowrap;
}

.big .txt {
    border-radius: 0;
    padding: 0 3px;
}

.left .big .txt {
    gap: 3.5px;
    padding-right: 2px;
}

.mid .txt {
    border-radius: 0;
    margin-left: 1px;
}

.sel.mid {
    height: 23px;
}

.arrow {
    width: 21px;
    height: 22px;
    margin-left: -1px;
    border: 1px solid #111;
    background: linear-gradient(#555, #3a3a3a);
    display: flex;
    align-items: center;
    justify-content: center;
}

.arrow::after {
    content: "";
    border: 4.5px solid transparent;
    border-top: 5px solid #1a1a1a;
    border-bottom: none;
}

.fields {
    margin-top: 4px;
    padding: 0 8px 0 5px;
    margin-bottom: 1px;
}

.field {
    height: 21.7px;
    display: flex;
    align-items: center;
}

.field.tall {
    height: 24px;
}

.field label {
    flex: 1;
    line-height: 18px;
    padding-bottom: 1px;
    white-space: nowrap;
}

.num-in {
    width: 28px;
    height: 20px;
    border: 1px solid #111;
    border-radius: 3px;
    background-color: #333;
    padding-left: 5px;
    line-height: 17px;
}

.box {
    width: 14px;
    height: 14px;
    margin-left: 2px;
    border: 1px solid #222;
    border-radius: 2px;
    background-color: #555;
}

.box.faint {
    border-color: transparent;
    background-color: rgba(80, 80, 110, .15);
}

.left .fields {
    padding-right: 9px;
}

.fold {
    height: 17px;
    margin: 0 5px 2px;
    border: 1px solid #333320;
    border-bottom: 1px dotted #666;
    border-radius: 5px 5px 0 0;
    background: linear-gradient(#505062, #3c3c48);
    font-family: "DejaVu Sans", sans-serif;
    font-weight: bold;
    font-size: 9.2px;
    letter-spacing: .2px;
    line-height: 17px;
    text-align: center;
    color: #bb9;
    text-shadow: 0 1px 1px #000;
}

.fold.open {
    height: 16.5px;
    margin-bottom: 0;
    background: linear-gradient(#3c3c48, #505062);
    color: #999080;
}

.foldbody {
    margin: 0 5px 2px;
    height: 68px;
    padding: 0 3px 0 4px;
    border: 1px solid #333320;
    border-top: none;
    border-bottom-width: 2px;
    background-color: #555566;
}

.foldbody .field {
    height: 22.3px;
}

.foldbody.adj {
    height: 23.5px;
    padding-top: 0;
    border-bottom-width: 1px;
    background-color: #44444f;
}

.adjust {
    height: 22px;
    padding: 0 5px;
    border: 1px solid #fff;
    border-radius: 4px;
    background-color: #333;
    line-height: 17px;
}

.status {
    position: absolute;
    left: 3px;
    right: 3px;
    bottom: 31px;
    height: 29px;
    display: flex;
    align-items: center;
    padding-left: 5px;
    padding-bottom: 1px;
    background-color: #445555;
    border: 1px solid #333320;
    border-top: none;
    color: #99aaaa;
    text-shadow: 0 0 1px #9aa;
}

.status span {
    width: 128px;
    line-height: 24px;
    padding-bottom: 1px;
}

.check {
    width: 13px;
    height: 13px;
    background-color: white;
    border: 1px solid #999;
    border-radius: 2px;
}

.stat {
    width: 56px;
    height: 21px;
    margin-left: 10px;
    border: 1px solid #111;
    border-radius: 3px;
    background-color: #666;
}

.actions {
    position: absolute;
    left: 26px;
    right: 23px;
    bottom: 6px;
    display: flex;
    justify-content: space-between;
}

.actions button {
    height: 20px;
    padding: 0;
    border: 1px solid #111;
    border-radius: 6px;
    background: linear-gradient(#333, #444);
    font: 600 13.6px "Noto Sans", sans-serif;
    line-height: 17px;
    letter-spacing: -.3px;
}

.upd {
    width: 204px;
    color: #3a3;
}

.dlt {
    width: 182px;
    color: #c00;
}

.wrench {
    position: absolute;
    right: 3px;
    top: 4px;
    width: 52px;
    height: 53px;
    padding: 3px;
    border: 1px solid #222;
    border-radius: 6px;
    background: linear-gradient(#888, #666);
    box-shadow: inset 0 0 0 1px #999;
}

.scroll {
    width: 20px;
    flex: none;
    background: linear-gradient(90deg, #333, #4a4a4a 50%, #3a3a3a);
    border-left: 1px solid #333;
    padding-top: 152px;
}

.thumb {
    height: 170px;
    margin: 0 2px 0 0;
    background: linear-gradient(90deg, #666, #808080 50%, #666);
}

/* taskbar */
.taskbar {
    height: 38px;
    flex: none;
    display: flex;
    background: linear-gradient(90deg, #3a2c48, #30354a 15%, #2c3c46 30%, #2b4240 40%, #2c4438);
    color: white;
}

.tb {
    width: 45px;
    display: flex;
    align-items: center;
    justify-content: center;
}

.app {
    width: 46.1px;
    position: relative;
}

.app::after {
    content: "";
    position: absolute;
    left: 5px;
    right: 5px;
    bottom: 0;
    height: 3px;
    background-color: #76b9ed;
}

.two::after {
    background: linear-gradient(90deg, #76b9ed 70%, #5d8fb8 70%);
}

.cur {
    margin-left: 4px;
    width: 45px;
    background-color: #5b5f74;
}

.cur::after,
.alert::after {
    left: 0;
    right: 0;
}

.alert {
    background-color: #ae6a34;
}

.alert::after {
    background-color: #ff7a00;
}

.tray {
    margin-left: auto;
    margin-right: 5px;
    padding-right: 25px;
    border-right: 1px solid #809088;
    display: flex;
    align-items: center;
    font-family: "Open Sans", sans-serif;
    font-size: 16px;
    line-height: 24px;
}

.weather {
    margin-left: 24px;
}

.temp {
    width: 47px;
    margin-left: 12px;
}

.sky {
    width: 98px;
    letter-spacing: .4px;
}

.cam {
    margin-left: 16px;
}

.pen {
    margin-left: 16px;
}

.clock {
    width: 58px;
    margin-left: 18px;
    font-size: 13.5px;
}
```
